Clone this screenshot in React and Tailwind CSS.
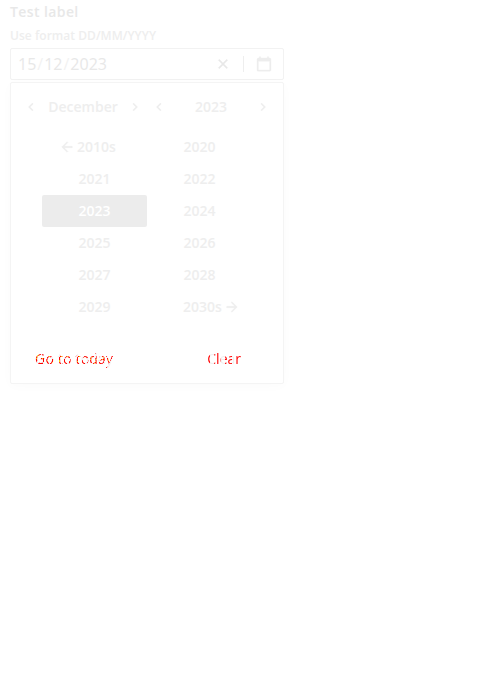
import React from "react";

const PATHS = {
  left: "M15.41 7.41 14 6l-6 6 6 6 1.41-1.41L10.83 12z",
  right: "M8.59 16.59 10 18l6-6-6-6-1.41 1.41L13.17 12z",
  back: "M20 11H7.83l5.59-5.59L12 4l-8 8 8 8 1.41-1.41L7.83 13H20v-2z",
  forward: "M12 4l-1.41 1.41L16.17 11H4v2h12.17l-5.58 5.59L12 20l8-8z",
  close: "M19 6.41 17.59 5 12 10.59 6.41 5 5 6.41 10.59 12 5 17.59 6.41 19 12 13.41 17.59 19 19 17.59 13.41 12z",
  calendar: "M20.5 3H19V1h-2v2H7V1H5v2H3.5C2.4 3 1.5 3.9 1.5 5v16c0 1.1.9 2 2 2h17c1.1 0 2-.9 2-2V5c0-1.1-.9-2-2-2zm0 18h-17V8h17v13z",
};

function Icon({ name, className = "size-4" }) {
  return (
    <svg viewBox="0 0 24 24" fill="currentColor" stroke="currentColor" strokeWidth="0.5" className={`shrink-0 ${className}`}>
      <path d={PATHS[name]} />
    </svg>
  );
}

const YEARS = ["2010s", "2020", "2021", "2022", "2023", "2024", "2025", "2026", "2027", "2028", "2029", "2030s"];

function Year({ year }) {
  const selected = year === "2023";
  const tone = selected ? "bg-[#ececec] text-white" : "text-[#eeeeee]";
  const inset = year === "2010s" ? "pr-3.5" : year === "2030s" ? "pl-6" : "";
  return (
    <button className={`flex h-8 items-center justify-center rounded-xs ${tone} ${inset}`}>
      {year === "2010s" && <Icon name="back" className="mr-0.5 size-4" />}
      {year}
      {year === "2030s" && <Icon name="forward" className="ml-0.5 size-4" />}
    </button>
  );
}

export default function App() {
  return (
    <div className="min-h-[700px] bg-white pl-2.5 font-['Open_Sans',sans-serif] text-sm font-semibold text-[#eeeeee]">
      <div className="flex w-[274px] flex-col">
        <div className="h-6 leading-6 tracking-[0.4px] text-[#e8e8e8]">Test label</div>
        <div className="h-6 text-xs leading-6 tracking-[0.03px]">Use format DD/MM/YYYY</div>
        <div className="flex h-8 items-center rounded-xs border border-[#f2f2f2] pl-[7px] text-base font-normal text-[#e8e8e8]">
          <span>15</span>
          <span className="px-px text-[#f2f2f2]">/</span>
          <span>12</span>
          <span className="px-px text-[#f2f2f2]">/</span>
          <span>2023</span>
          <Icon name="close" className="ml-auto mr-3 size-4" />
          <div className="h-4 w-px bg-[#eeeeee]" />
          <Icon name="calendar" className="ml-3 mr-[11px] size-4 text-[#ededed]" />
        </div>
        <div className="mt-0.5 flex h-[302px] flex-col rounded-xs border border-[#f4f4f4] shadow-[0_2px_12px_rgba(0,0,0,0.02)]">
          <div className="flex h-12 items-center pl-3">
            <Icon name="left" />
            <span className="w-[88px] text-center">December</span>
            <Icon name="right" />
            <Icon name="left" className="ml-2 size-4" />
            <span className="w-[88px] text-center">2023</span>
            <Icon name="right" />
          </div>
          <div className="mx-auto grid w-[210px] grid-cols-2">
            {YEARS.map((year) => <Year key={year} year={year} />)}
          </div>
          <div className="mt-auto flex h-12 items-center pl-6">
            <button className="bg-[repeating-linear-gradient(115deg,#ff0000_0_2px,#f0eeee_2px_3.5px,#ff0000_3.5px_5px,#f3d000_5px_5.5px)] bg-clip-text font-normal tracking-[0.2px] text-transparent">
              Go to today
            </button>
            <button className="ml-auto mr-[42px] bg-[repeating-linear-gradient(90deg,#ff0000_0_3px,#f0eeee_3px_7px,#ff0000_7px_11px)] bg-clip-text font-normal text-transparent">
              Clear
            </button>
          </div>
        </div>
      </div>
    </div>
  );
}
